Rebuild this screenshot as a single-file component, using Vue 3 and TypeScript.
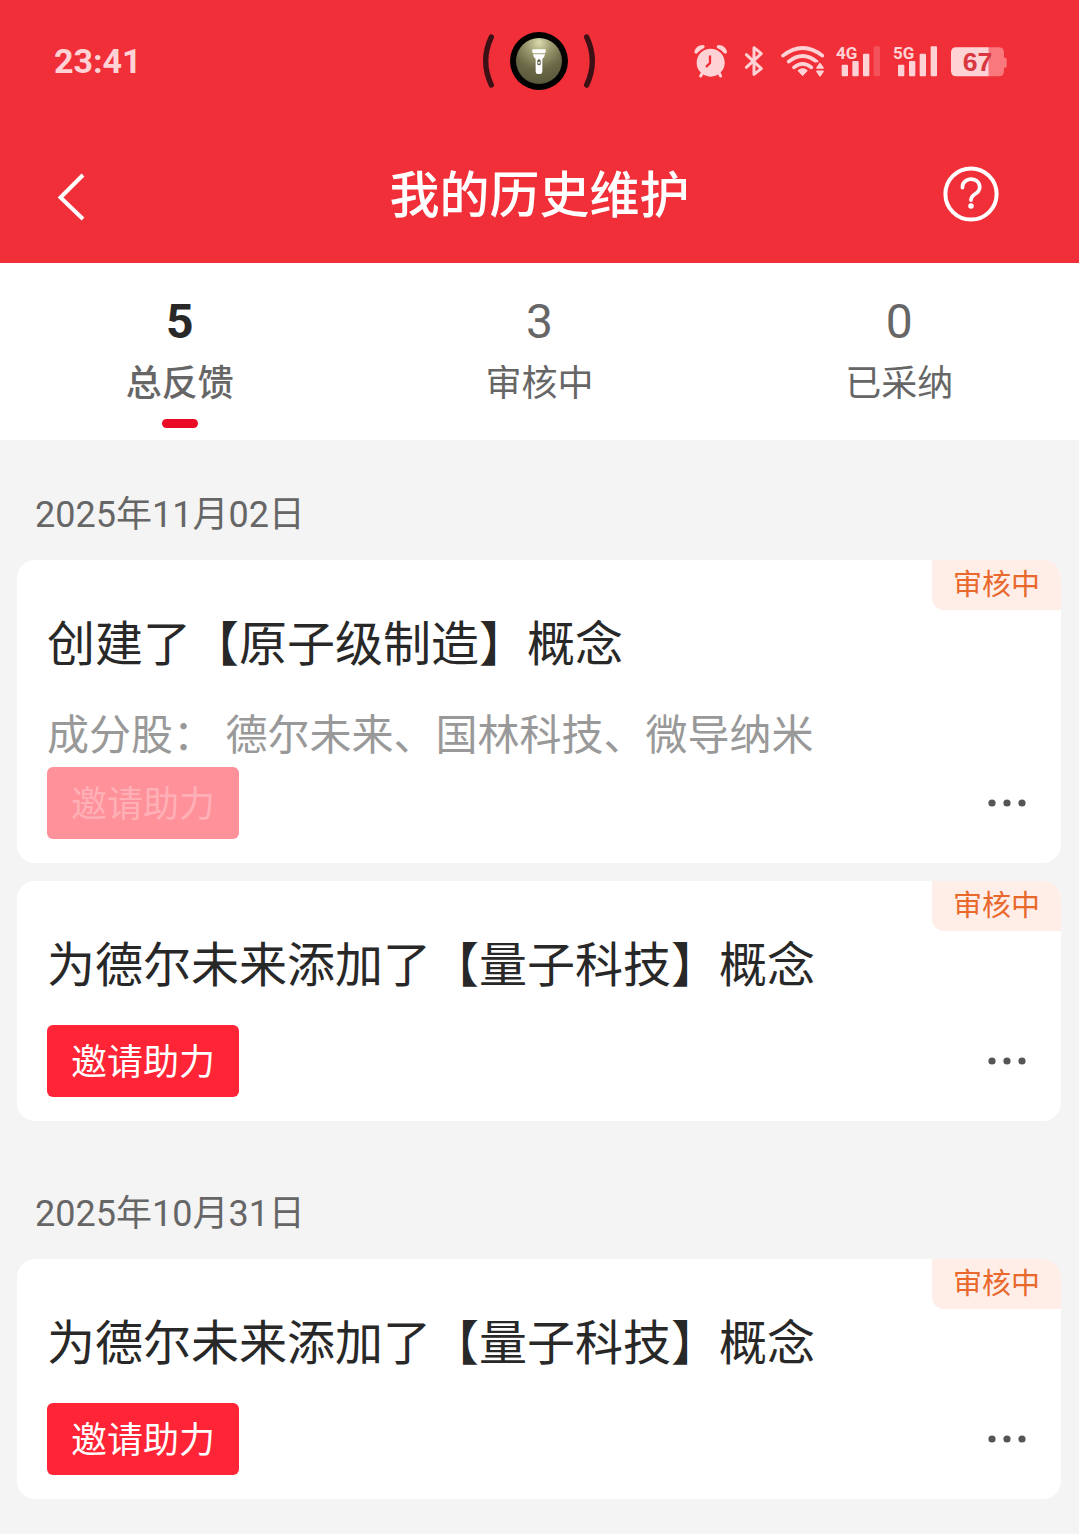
<script setup lang="ts">
import { ref } from 'vue'

interface Tab {
  count: number
  label: string
}

interface Entry {
  title: string
  stocks?: string
  status: string
  inviteDisabled: boolean
}

interface Group {
  date: string
  entries: Entry[]
}

const tabs: Tab[] = [
  { count: 5, label: '总反馈' },
  { count: 3, label: '审核中' },
  { count: 0, label: '已采纳' },
]

const activeTab = ref(0)

const groups: Group[] = [
  {
    date: '2025年11月02日',
    entries: [
      {
        title: '创建了【原子级制造】概念',
        stocks: '德尔未来、国林科技、微导纳米',
        status: '审核中',
        inviteDisabled: true,
      },
      { title: '为德尔未来添加了【量子科技】概念', status: '审核中', inviteDisabled: false },
    ],
  },
  {
    date: '2025年10月31日',
    entries: [
      { title: '为德尔未来添加了【量子科技】概念', status: '审核中', inviteDisabled: false },
    ],
  },
]
</script>

<template>
  <div class="page">
    <header class="top">
      <div class="status-bar">
        <span class="time">23:41</span>

        <svg class="island" width="116" height="62" viewBox="0 0 348 186" aria-hidden="true">
          <defs>
            <radialGradient id="torch-glow" cx="0.5" cy="0.1" r="0.9">
              <stop offset="0" stop-color="#dcdcae" />
              <stop offset="0.3" stop-color="#9c9a70" />
              <stop offset="0.65" stop-color="#6a6846" />
              <stop offset="1" stop-color="#59583c" />
            </radialGradient>
          </defs>
          <path d="M28 21Q-6 93 28 165M314 21Q348 93 314 165" fill="none" stroke="#3d1016" stroke-width="16" stroke-linecap="round" />
          <circle cx="171" cy="93" r="87" fill="#000" />
          <circle cx="171" cy="93" r="69" fill="url(#torch-glow)" />
          <path d="M151 58h40v8q0 4-4 4h-32q-4 0-4-4zM153 73h36q-1 8-8 14v38q0 7-7 7h-6q-7 0-7-7v-38q-7-6-8-14z" fill="#fff" />
          <rect x="166" y="88" width="10" height="18" rx="5" fill="#5b5a3f" />
          <circle cx="171" cy="98" r="3" fill="#fff" />
        </svg>

        <div class="indicators">
          <svg width="35" height="35" viewBox="0 0 105 105" aria-hidden="true">
            <circle cx="53" cy="56" r="42" fill="#ffd3d5" />
            <path d="M9 24Q13 9 30 8Q16 14 9 24zM97 24Q93 9 76 8Q90 14 97 24z" fill="#ffd3d5" stroke="#ffd3d5" stroke-width="10" stroke-linejoin="round" />
            <path d="M28 87l-5 9M78 87l5 9" stroke="#ffd3d5" stroke-width="9" stroke-linecap="round" />
            <path d="M51 37v20l-10 10" fill="none" stroke="#f12f38" stroke-width="7" stroke-linecap="round" stroke-linejoin="round" />
          </svg>
          <svg width="28" height="35" viewBox="0 0 84 105" aria-hidden="true">
            <path d="M19 32L64 74 42 91V11l22 18L19 70" fill="none" stroke="#ffd3d5" stroke-width="9" stroke-linecap="round" stroke-linejoin="round" />
          </svg>
          <svg width="44" height="35" viewBox="0 0 132 105" aria-hidden="true">
            <path d="M9 35Q68-11 127 35M26 53Q68 19 110 53M42 70Q68 49 94 70" fill="none" stroke="#ffd3d5" stroke-width="11" stroke-linecap="round" />
            <path d="M54 80q14-12 28 0L68 95z" fill="#ffd3d5" stroke="#ffd3d5" stroke-width="3" stroke-linejoin="round" />
            <path d="M106 55h26v45h-26z" fill="#f12f38" />
            <path d="M120 59l9 13h-18zM120 95l9-13h-18z" fill="#ffd3d5" stroke="#ffd3d5" stroke-width="5" stroke-linejoin="round" />
          </svg>
          <svg width="45" height="35" viewBox="0 0 135 105" role="img" aria-label="4G">
            <text x="0" y="44" class="network">4G</text>
            <g fill="#ffd3d5">
              <rect x="17" y="62" width="19" height="35" rx="3" />
              <rect x="49" y="51" width="19" height="46" rx="3" />
              <rect x="81" y="29" width="19" height="68" rx="3" />
              <rect x="113" y="7" width="19" height="90" rx="3" opacity="0.22" />
            </g>
          </svg>
          <svg width="45" height="35" viewBox="0 0 135 105" role="img" aria-label="5G">
            <text x="0" y="44" class="network">5G</text>
            <g fill="#ffd3d5">
              <rect x="15" y="62" width="19" height="35" rx="3" />
              <rect x="48" y="51" width="19" height="46" rx="3" />
              <rect x="80" y="29" width="19" height="68" rx="3" />
              <rect x="113" y="7" width="19" height="90" rx="3" />
            </g>
          </svg>
          <svg width="57" height="35" viewBox="0 0 171 105" role="img" aria-label="67%">
            <path d="M116 10h30q16 0 16 16v15h3q5 0 5 5v20q0 5-5 5h-3v10q0 16-16 16h-30z" fill="#f8787e" />
            <path d="M19 10h97v87H19q-16 0-16-16V26q0-16 16-16z" fill="#ffd3d5" />
            <text x="38" y="82" class="charge">67</text>
          </svg>
        </div>
      </div>

      <nav class="nav">
        <button type="button" aria-label="返回">
          <svg width="60" height="60" viewBox="0 0 60 60" aria-hidden="true">
            <path d="M41 9L18.500 31.500 41 53" fill="none" stroke="#fff" stroke-width="4" />
          </svg>
        </button>
        <h1>我的历史维护</h1>
        <button type="button" aria-label="帮助">
          <svg width="60" height="60" viewBox="0 0 60 60" aria-hidden="true">
            <circle cx="30" cy="28" r="25.600" fill="none" stroke="#fff" stroke-width="4" />
            <path d="M21.500 21.500A8.600 7.800 0 1 1 35.500 27Q30 30.500 30 34" fill="none" stroke="#fff" stroke-width="3.800" stroke-linecap="round" />
            <circle cx="30" cy="40" r="2.800" fill="#fff" />
          </svg>
        </button>
      </nav>
    </header>

    <div class="tabs" role="tablist">
      <button
        v-for="(tab, index) in tabs"
        :key="tab.label"
        class="tab"
        :class="{ active: index === activeTab }"
        type="button"
        role="tab"
        :aria-selected="index === activeTab"
        @click="activeTab = index"
      >
        <span class="count">{{ tab.count }}</span>
        <span class="label">{{ tab.label }}</span>
        <span class="marker"></span>
      </button>
    </div>

    <main>
      <section v-for="group in groups" :key="group.date">
        <h2>{{ group.date }}</h2>
        <article v-for="entry in group.entries" :key="entry.title" class="card">
          <span class="tag">{{ entry.status }}</span>
          <h3>{{ entry.title }}</h3>
          <p v-if="entry.stocks" class="stocks">成分股： {{ entry.stocks }}</p>
          <div class="actions">
            <button class="invite" type="button" :disabled="entry.inviteDisabled">邀请助力</button>
            <button class="more" type="button" aria-label="更多">
              <svg width="38" height="8" viewBox="0 0 38 8" fill="#555" aria-hidden="true">
                <circle cx="4" cy="4" r="3.600" />
                <circle cx="19" cy="4" r="3.600" />
                <circle cx="34" cy="4" r="3.600" />
              </svg>
            </button>
          </div>
        </article>
      </section>
    </main>
  </div>
</template>

<style>
body {
  margin: 0;
  background: #f4f4f4;
}
</style>

<style scoped>
.page {
  min-height: 100vh;
  background: #f4f4f4;
  color: #282828;
  font-family: Roboto, "Noto Sans CJK SC", sans-serif;
}

h1,
h2,
h3,
p {
  margin: 0;
  font-weight: 400;
}

button {
  padding: 0;
  border: 0;
  background: none;
  color: inherit;
  font: inherit;
}

svg {
  display: block;
}

.top {
  background: #f12f38;
  color: #fff;
}

.status-bar {
  display: grid;
  grid-template-columns: 1fr auto 1fr;
  align-items: center;
  box-sizing: border-box;
  height: 128px;
  padding: 0 54px 6px;
}

.time {
  color: #ffd3d5;
  font-size: 34px;
  font-weight: 700;
  line-height: 40px;
}

.indicators {
  display: flex;
  justify-content: flex-end;
  gap: 12px;
  margin-right: 18px;
}

.network {
  fill: #ffd3d5;
  font-size: 51px;
  font-weight: 700;
}

.charge {
  fill: #d9363f;
  font-family: "Liberation Sans", sans-serif;
  font-size: 80px;
  font-weight: 700;
}

.nav {
  display: flex;
  align-items: center;
  justify-content: space-between;
  height: 135px;
  padding: 0 78px 0 42px;
}

.nav h1 {
  flex: 1;
  padding-left: 36px;
  font-size: 50px;
  font-weight: 500;
  line-height: 60px;
  text-align: center;
}

.tabs {
  display: flex;
  background: #fff;
}

.tab {
  display: flex;
  flex: 1;
  flex-direction: column;
  align-items: center;
  padding: 29px 0 12px;
  color: #666;
}

.count {
  font-size: 48px;
  line-height: 60px;
}

.label {
  font-size: 36px;
  line-height: 64px;
}

.marker {
  width: 36px;
  height: 9px;
  margin-top: 3px;
  border-radius: 5px;
}

.active .count {
  color: #282828;
  font-weight: 700;
}

.active .label {
  font-weight: 500;
}

.active .marker {
  background: #ea0a26;
}

h2 {
  padding: 51px 35px 21px;
  color: #666;
  font-size: 36px;
  line-height: 48px;
}

.card {
  position: relative;
  overflow: hidden;
  margin: 0 18px 18px 17px;
  padding: 50px 30px 24px;
  border-radius: 18px;
  background: #fff;
}

.tag {
  position: absolute;
  top: 0;
  right: 0;
  padding: 0 21px;
  border-bottom-left-radius: 12px;
  background: #ffeee8;
  color: #e9682c;
  font-size: 29px;
  line-height: 50px;
}

h3 {
  padding-bottom: 24px;
  font-size: 48px;
  line-height: 70px;
}

.stocks {
  color: #999;
  font-size: 42px;
  line-height: 63px;
}

.actions {
  display: flex;
  align-items: center;
  justify-content: space-between;
}

.invite {
  width: 192px;
  height: 72px;
  padding-bottom: 4px;
  border-radius: 6px;
  background: #ff2436;
  color: #fff;
  font-size: 36px;
}

.invite:disabled {
  background: #ff919a;
  color: #ffb0b6;
}

.more {
  padding: 16px 5px;
}
</style>
